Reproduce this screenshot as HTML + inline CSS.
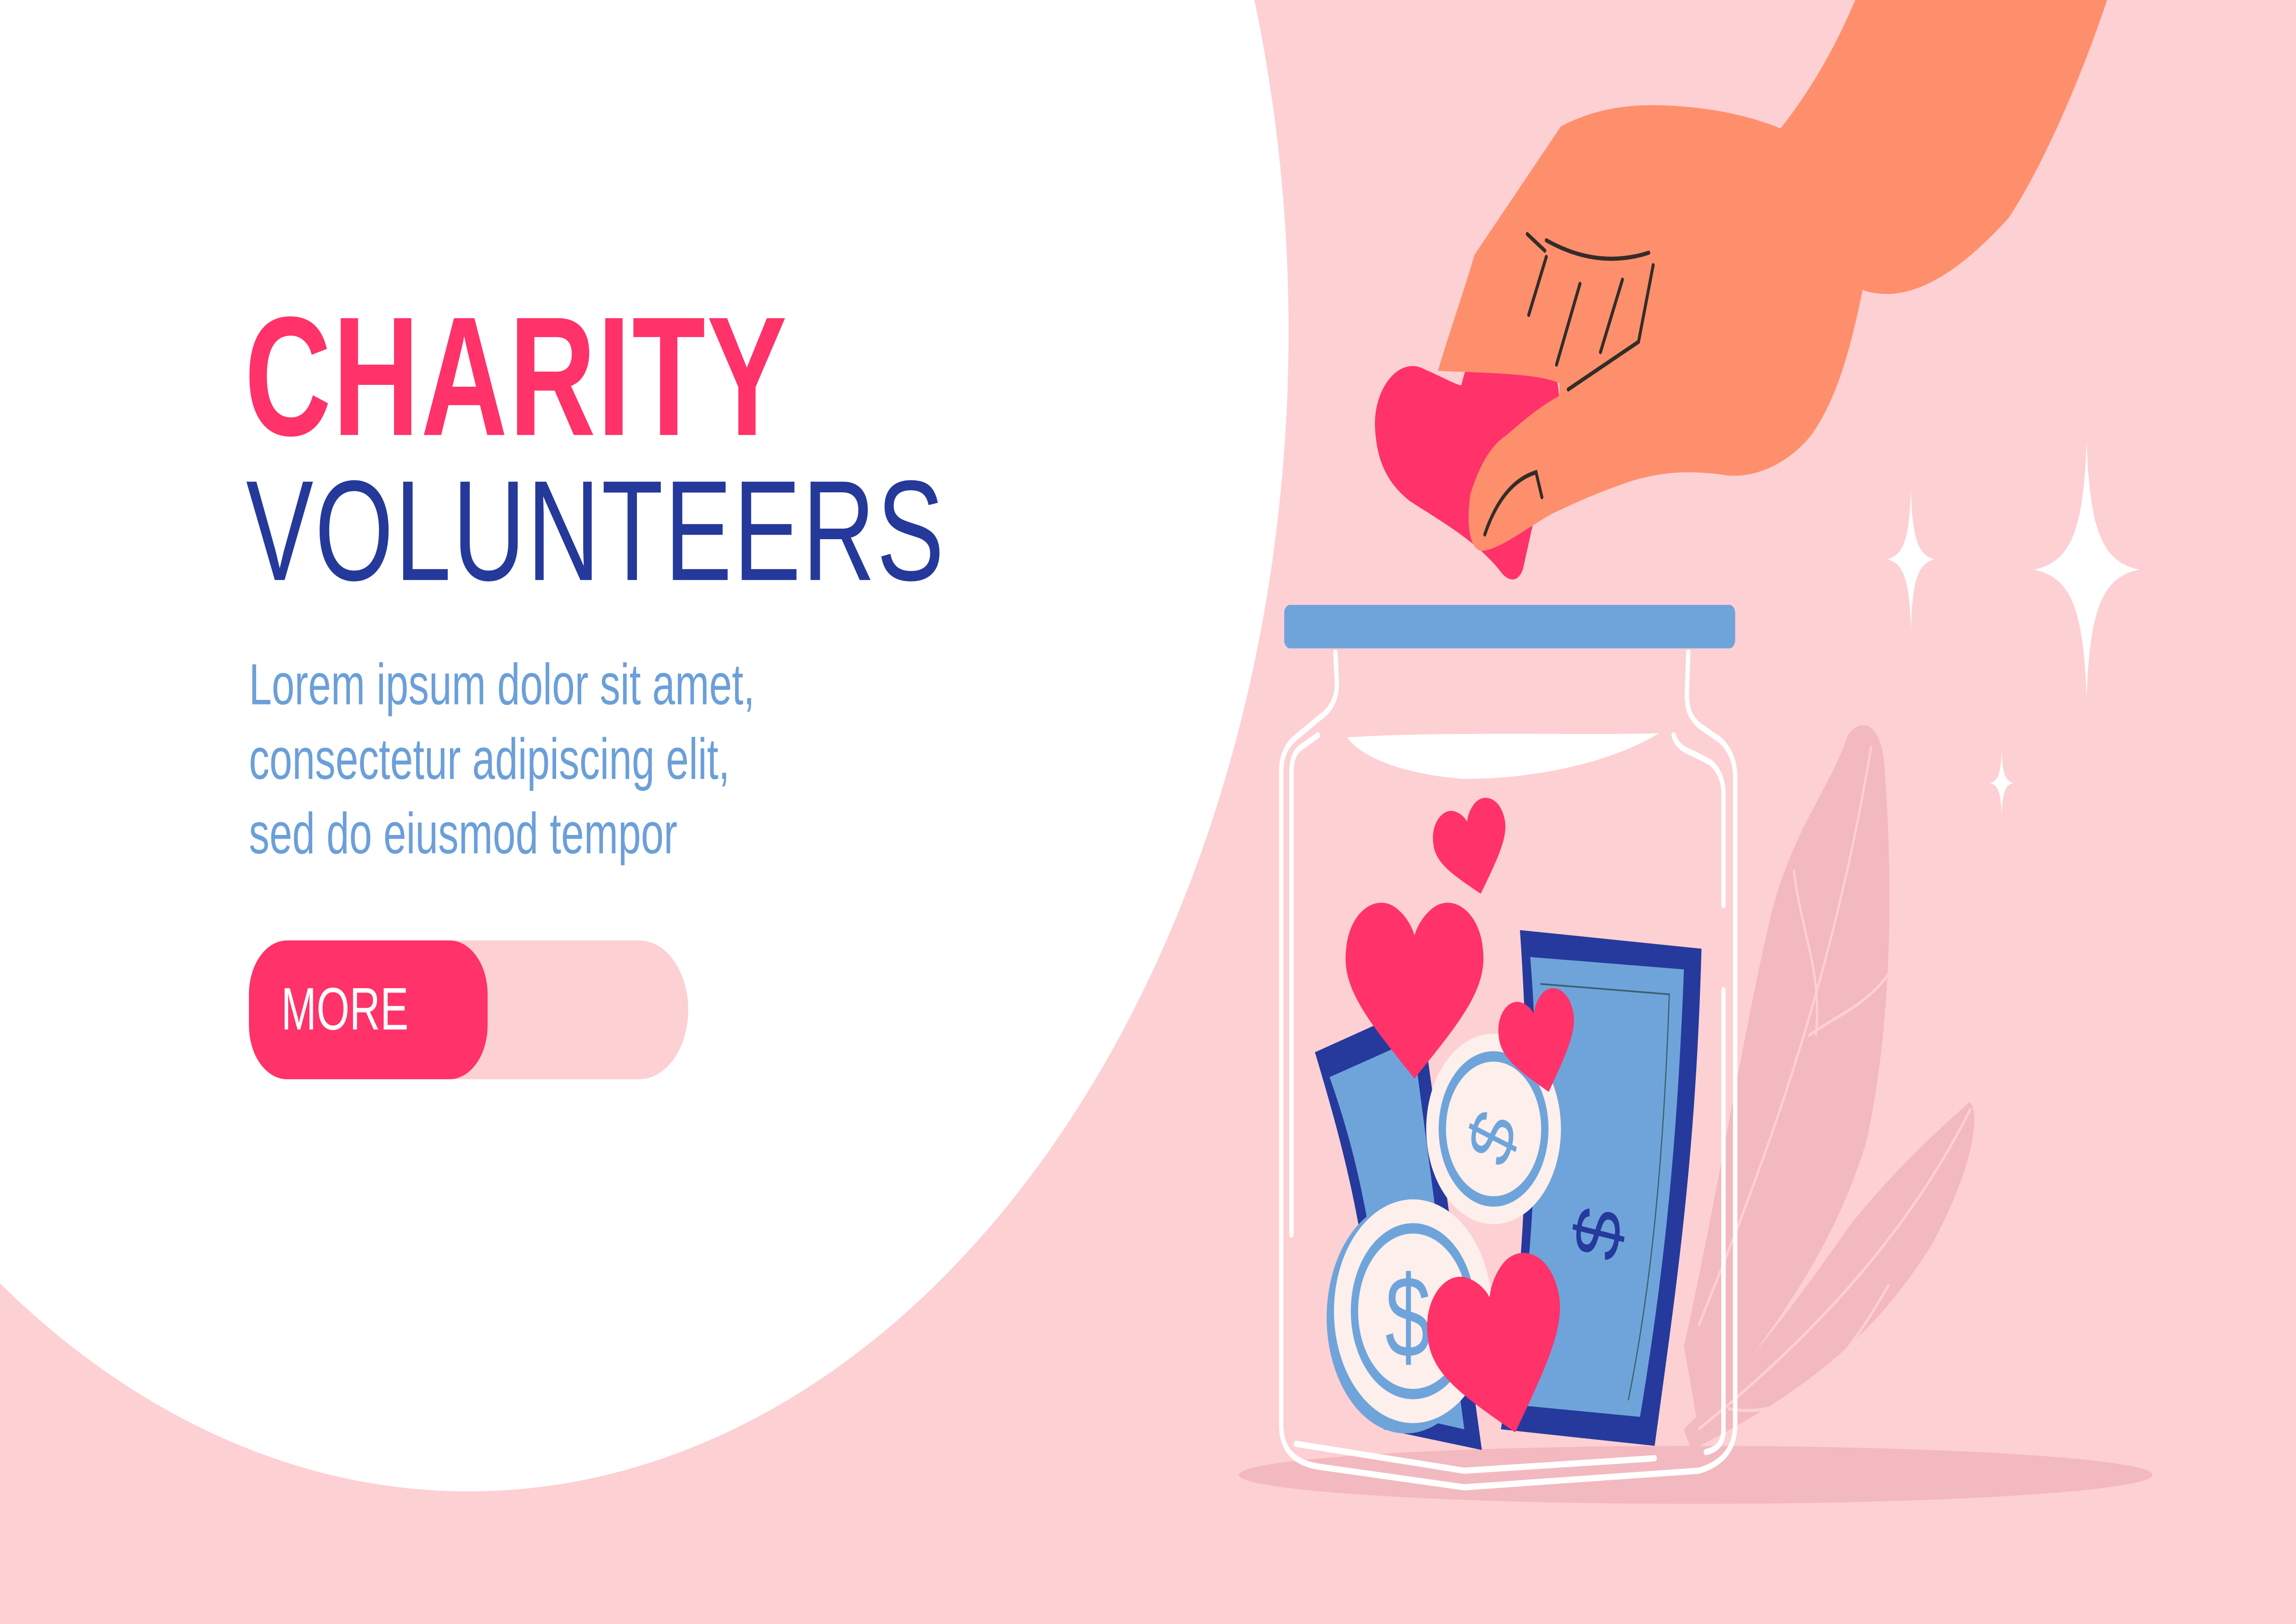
<!DOCTYPE html>
<html><head><meta charset="utf-8">
<style>
html,body{margin:0;padding:0;background:#fdd0d3;overflow:hidden;width:100%;height:100%}
svg{display:block;width:100vw;height:100vh}
</style></head>
<body>
<svg viewBox="0 0 1568 784" preserveAspectRatio="none" xmlns="http://www.w3.org/2000/svg">
<defs>
<path id="ht" d="M0,0.42 C-0.35,0.12 -0.55,-0.05 -0.52,-0.25 C-0.5,-0.45 -0.3,-0.55 -0.15,-0.48 C-0.07,-0.44 -0.02,-0.38 0,-0.33 C0.02,-0.38 0.07,-0.44 0.15,-0.48 C0.3,-0.55 0.5,-0.45 0.52,-0.25 C0.55,-0.05 0.35,0.12 0,0.42Z"/>
<path id="sp" d="M0,-1 C0.06,-0.3 0.3,-0.06 1,0 C0.3,0.06 0.06,0.3 0,1 C-0.06,0.3 -0.3,0.06 -1,0 C-0.3,-0.06 -0.06,-0.3 0,-1Z"/>
</defs>
<rect width="1568" height="784" fill="#fdd0d3"/>
<circle cx="320" cy="160" r="560" fill="#ffffff"/>

<text x="167" y="210" font-family="Liberation Sans, sans-serif" font-weight="bold" font-size="82" fill="#ff3269" letter-spacing="1">CHARITY</text>
<text x="168" y="280" font-family="Liberation Sans, sans-serif" font-size="69" fill="#25399b" letter-spacing="1">VOLUNTEERS</text>
<g font-family="Liberation Sans, sans-serif" font-size="28" fill="#6b9fd9">
<text x="170" y="340">Lorem ipsum dolor sit amet,</text>
<text x="170" y="376">consectetur adipiscing elit,</text>
<text x="170" y="412">sed do eiusmod tempor</text>
</g>
<rect x="170" y="454" width="300" height="67" rx="33.5" fill="#fdd0d3"/>
<rect x="170" y="454" width="163" height="67" rx="26" fill="#ff3269"/>
<text x="192" y="497" font-family="Liberation Sans, sans-serif" font-size="29" fill="#ffffff">MORE</text>

<ellipse cx="1158" cy="712" rx="312" ry="14" fill="#f3b9c0"/>
<path d="M1150,650 C1175,570 1190,500 1210,440 C1225,400 1250,380 1262,355 C1272,345 1285,350 1287,370 C1294,440 1290,500 1275,550 C1250,610 1200,650 1160,690 Z" fill="#f3b9c0"/>
<path d="M1150,690 C1200,655 1230,625 1265,590 C1300,560 1325,545 1345,532 C1352,536 1350,560 1320,600 C1285,640 1240,670 1155,700 Z" fill="#f3b9c0"/>
<g fill="none" stroke="#fdd0d3" stroke-width="1.5">
<path d="M1160,640 C1200,570 1250,480 1278,360"/>
<path d="M1160,690 C1230,650 1300,600 1346,535"/>
<path d="M1225,420 C1230,450 1245,470 1240,500"/>
<path d="M1235,500 C1255,490 1275,485 1290,470"/>
<path d="M1180,680 C1220,685 1250,670 1290,620"/>
</g>

<use href="#sp" transform="translate(1305,270) scale(16,34)" fill="#fff"/>
<use href="#sp" transform="translate(1425,275) scale(36,62)" fill="#fff"/>
<use href="#sp" transform="translate(1367,378) scale(8,16)" fill="#fff"/>

<rect x="877" y="292" width="308" height="21" rx="4" fill="#6fa4db"/>

<path d="M898,508 L970,485 L1012,700 L945,690 C935,600 920,560 898,508Z" fill="#253a9c"/>
<path d="M908,520 L965,502 L1000,690 L950,682 C940,600 928,560 908,520Z" fill="#6fa4db"/>
<path d="M1038,449 L1162,458 C1158,560 1145,620 1130,698 L1025,690 C1045,600 1045,520 1038,449Z" fill="#253a9c"/>
<path d="M1045,462 L1150,468 C1145,560 1135,620 1120,684 L1032,678 C1050,600 1052,520 1045,462Z" fill="#6fa4db"/>
<path d="M1052,475 L1140,480 C1136,560 1128,620 1112,676" fill="none" stroke="#3a6070" stroke-width="0.8"/>
<text x="1062" y="590" font-family="Liberation Sans, sans-serif" font-size="44" fill="#253a9c" transform="rotate(-80 1095 575)">$</text>

<circle cx="1020" cy="545" r="46" fill="#fcefec"/>
<circle cx="1020" cy="545" r="35" fill="none" stroke="#6fa4db" stroke-width="5"/>
<text x="1004" y="560" font-family="Liberation Sans, sans-serif" font-size="42" fill="#6fa4db" transform="rotate(-70 1020 545)">$</text>
<ellipse cx="960" cy="636" rx="54" ry="56" fill="#6fa4db"/>
<circle cx="965" cy="633" r="54" fill="#fcefec"/>
<circle cx="965" cy="633" r="40" fill="none" stroke="#6fa4db" stroke-width="5"/>
<text x="946" y="655" font-family="Liberation Sans, sans-serif" font-size="56" fill="#6fa4db">$</text>

<use href="#ht" transform="translate(966,482) scale(90,92)" fill="#ff3269"/>
<use href="#ht" transform="translate(1006,412) rotate(-15) scale(48,48)" fill="#ff3269"/>
<use href="#ht" transform="translate(1052,506) rotate(-15) scale(50,52)" fill="#ff3269"/>
<use href="#ht" transform="translate(1025,655) rotate(-15) scale(88,90)" fill="#ff3269"/>

<g fill="none" stroke="#ffffff" stroke-width="3" stroke-linecap="round">
<path d="M912,315 L913,330 C913,338 908,343 902,346 L885,356 C878,360 875,366 875,372 L875,688 C875,700 884,706 900,708 L1000,718 L1160,710 C1175,707 1185,700 1185,688 L1185,375 C1185,365 1178,358 1170,355 L1160,350 C1154,346 1152,342 1152,335 L1153,315"/>
<path d="M900,355 L888,361 C883,364 882,368 882,373 L882,596"/>
<path d="M1143,355 C1145,360 1150,362 1157,364 L1168,368 C1173,371 1177,376 1177,383 L1177,437"/>
<path d="M1177,478 L1177,690 C1177,697 1172,700 1165,701"/>
<path d="M885,697 L1000,710 L1130,704"/>
</g>
<path d="M920,356 C980,353 1080,355 1133,354 C1100,368 1050,376 1000,376 C960,374 930,366 920,356Z" fill="#ffffff"/>

<path d="M939,206 C938,188 955,172 972,178 C985,182 995,186 998,186 C1005,165 1020,150 1035,154 C1055,160 1065,180 1065,195 L1040,275 C1036,282 1030,280 1026,277 C1010,262 985,252 963,242 C945,232 940,220 939,206Z" fill="#ff3269"/>

<path d="M1267,0 L1439,0 C1420,40 1395,80 1372,105 C1340,130 1305,148 1272,140 C1262,175 1252,195 1237,210 C1220,225 1195,232 1175,229 C1150,227 1135,228 1115,232 C1090,238 1075,243 1060,248 C1040,256 1025,265 1012,266 C1002,265 1002,250 1004,239 C1010,225 1018,215 1029,210 C1045,200 1055,195 1065,191 L1065,185 C1050,180 1010,180 982,179 C990,160 1000,140 1007,123 L1066,61 C1090,52 1115,50 1140,51 C1170,52 1195,56 1216,62 C1235,45 1252,25 1267,0Z" fill="#fe8f6c"/>
<path d="M1272,140 C1320,120 1380,80 1439,0 L1380,0 L1250,100Z" fill="#fe8f6c"/>
<g fill="none" stroke="#332d2a" stroke-width="2" stroke-linecap="round">
<path d="M1043,113 L1055,121"/>
<path d="M1056,116 Q1091,130 1126,122"/>
<path d="M1056,124 L1044,152"/>
<path d="M1079,137 L1063,176"/>
<path d="M1108,135 L1093,170"/>
<path d="M1129,128 L1119,165 L1071,188"/>
<path d="M1014,258 Q1026,233 1049,228 L1053,240"/>
</g>
</svg>
</body></html>
